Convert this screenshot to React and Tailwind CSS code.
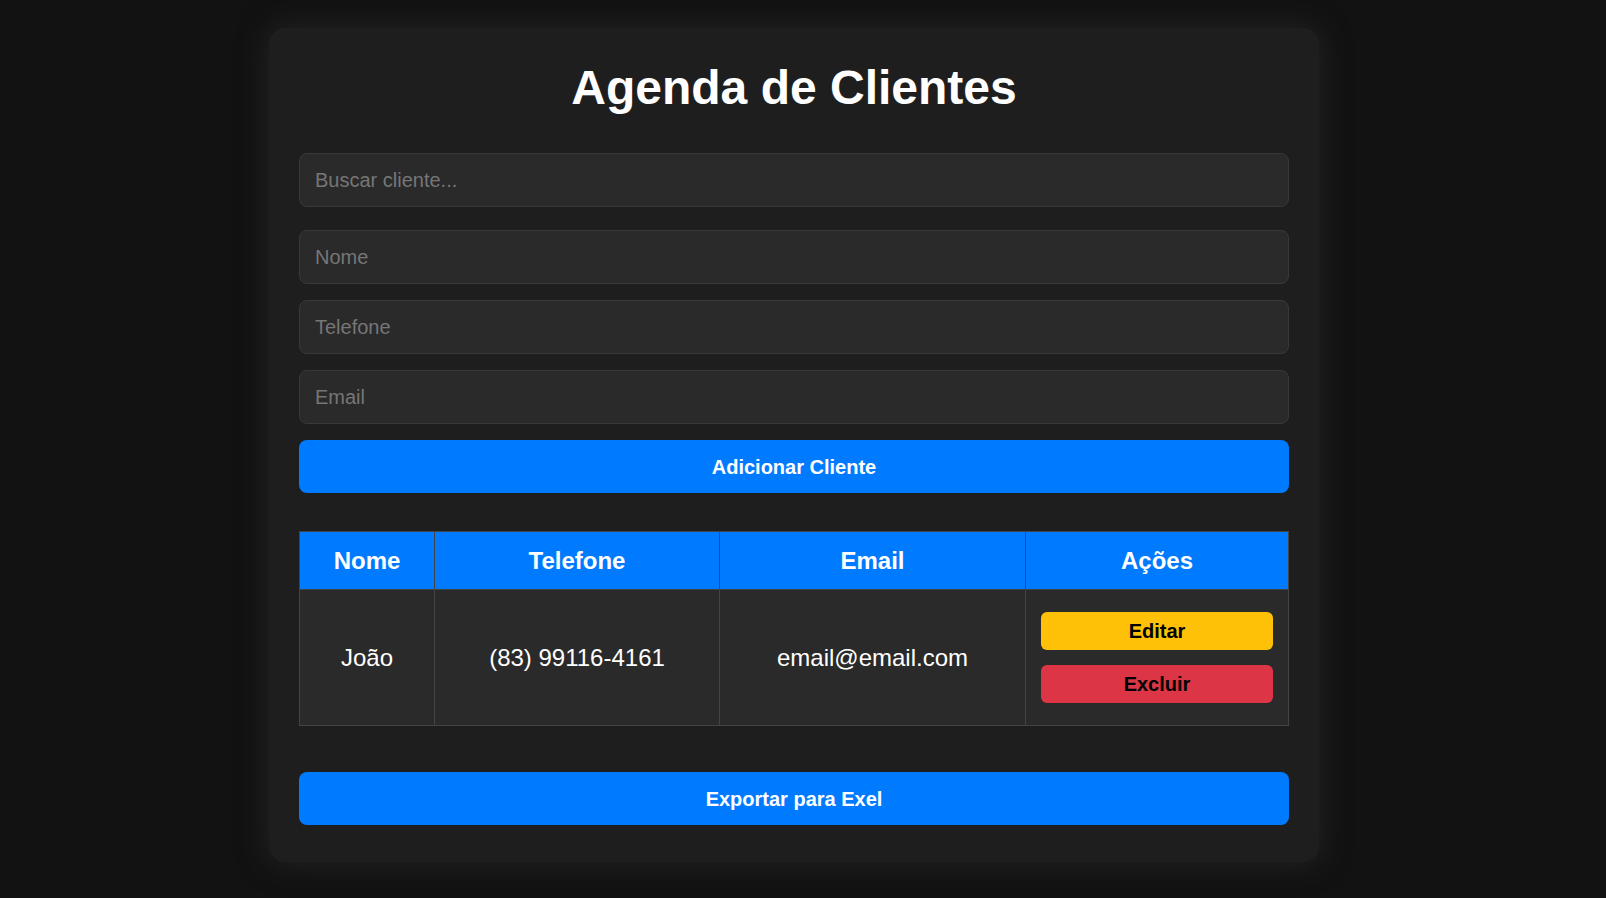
import React, { useState } from "react";

const clientes = [{ nome: "João", telefone: "(83) 99116-4161", email: "email@email.com" }];

function Campo({ placeholder, className = "" }) {
  return (
    <input
      placeholder={placeholder}
      className={`block w-full h-[54px] px-[15px] rounded-lg border border-[#383838] bg-[#2a2a2a] text-[20px] text-white placeholder:text-[#767676] outline-none ${className}`}
    />
  );
}

export default function App() {
  const [busca, setBusca] = useState("");

  return (
    <div
      className="min-h-screen bg-[#121212] flex justify-center pr-[18px] pt-[28px] pb-[40px]"
      style={{ fontFamily: '"Liberation Sans", Arial, sans-serif' }}
    >
      <div className="w-[1050px] px-[30px] pt-[30px] pb-[37px] rounded-2xl bg-[#1e1e1e] shadow-[0_0_30px_rgba(40,40,40,0.9)]">
        <h1 className="mt-[2px] mb-[38px] text-center text-[48px] leading-[55px] font-bold text-white">
          Agenda de Clientes
        </h1>

        <input
          value={busca}
          onChange={(e) => setBusca(e.target.value)}
          placeholder="Buscar cliente..."
          className="block w-full h-[54px] mb-[23px] px-[15px] rounded-lg border border-[#383838] bg-[#2a2a2a] text-[20px] text-white placeholder:text-[#767676] outline-none"
        />

        <div className="flex flex-col gap-4">
          <Campo placeholder="Nome" />
          <Campo placeholder="Telefone" />
          <Campo placeholder="Email" />
          <button className="h-[53px] w-full rounded-lg bg-[#007bff] text-[20px] font-bold text-white">
            Adicionar Cliente
          </button>
        </div>

        <table className="mt-[38px] w-full table-fixed border-collapse text-[24px] text-white">
          <colgroup>
            <col className="w-[135px]" />
            <col className="w-[285px]" />
            <col className="w-[306px]" />
            <col className="w-[263px]" />
          </colgroup>
          <thead>
            <tr className="bg-[#007bff]">
              {["Nome", "Telefone", "Email", "Ações"].map((h) => (
                <th key={h} className="h-[58px] border border-[#444] font-bold text-center">
                  {h}
                </th>
              ))}
            </tr>
          </thead>
          <tbody>
            {clientes
              .filter((c) => c.nome.toLowerCase().includes(busca.toLowerCase()))
              .map((c) => (
                <tr key={c.email} className="bg-[#2a2a2a]">
                  <td className="border border-[#444] text-center">{c.nome}</td>
                  <td className="border border-[#444] text-center">{c.telefone}</td>
                  <td className="border border-[#444] text-center">{c.email}</td>
                  <td className="border border-[#444] px-[15px] py-[22px]">
                    <div className="flex flex-col gap-[15px]">
                      <button className="h-[38px] w-full rounded-md bg-[#ffc107] text-[20px] font-bold text-black">
                        Editar
                      </button>
                      <button className="h-[38px] w-full rounded-md bg-[#dc3545] text-[20px] font-bold text-black">
                        Excluir
                      </button>
                    </div>
                  </td>
                </tr>
              ))}
          </tbody>
        </table>

        <button className="mt-[46px] h-[53px] w-full rounded-lg bg-[#007bff] text-[20px] font-bold text-white">
          Exportar para Exel
        </button>
      </div>
    </div>
  );
}
